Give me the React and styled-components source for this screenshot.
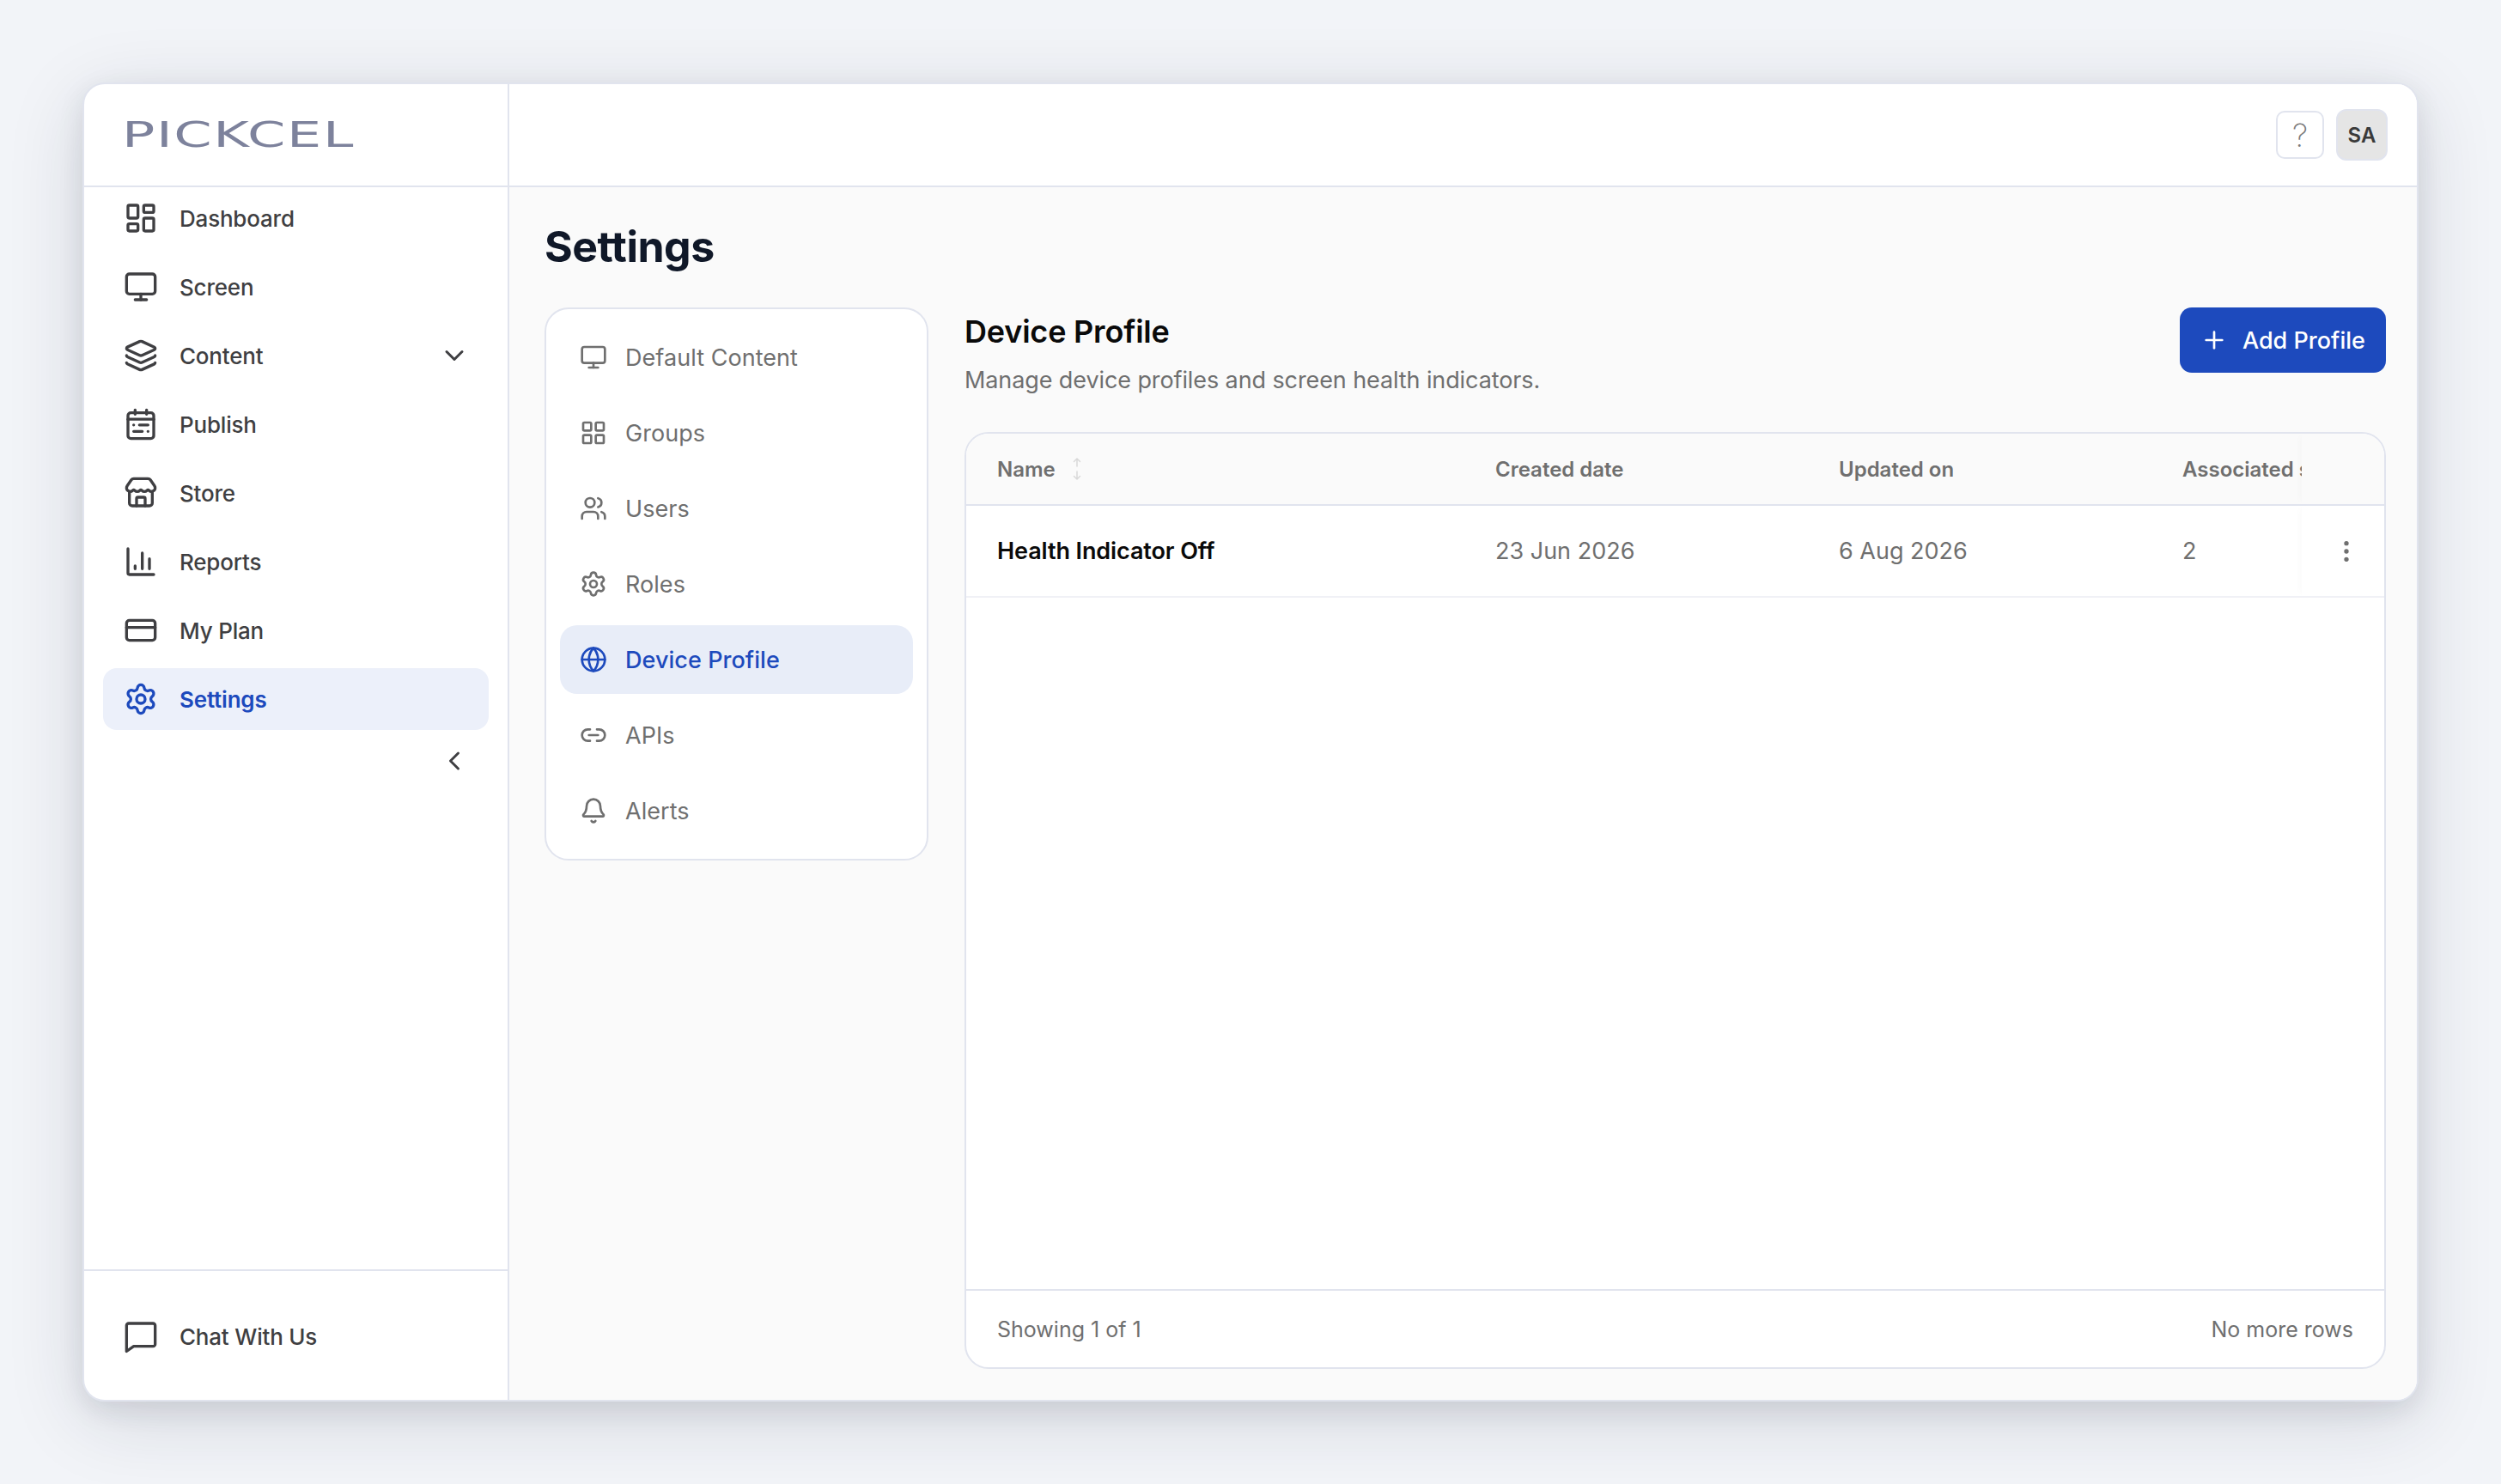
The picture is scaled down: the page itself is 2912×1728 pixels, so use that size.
import styled, { createGlobalStyle } from "styled-components";
import {
  Bell,
  ChevronDown,
  ChevronLeft,
  CreditCard,
  EllipsisVertical,
  Globe,
  LayoutDashboard,
  LayoutGrid,
  Layers,
  Link2,
  Monitor,
  Plus,
  Settings,
  Store,
  Users,
} from "lucide-react";

const GlobalStyle = createGlobalStyle`
  html, body {
    margin: 0;
    background: #f2f4f8;
  }
  * {
    box-sizing: border-box;
  }
`;

const Page = styled.div`
  width: 2912px;
  height: 1728px;
  padding: 96px;
  font-family: Inter, "Noto Sans", sans-serif;
`;

const Card = styled.div`
  display: flex;
  height: 100%;
  background: #fff;
  border: 2px solid #e1e4ee;
  border-radius: 26px;
  overflow: hidden;
  box-shadow: 0 10px 30px rgba(30, 35, 60, 0.1), 0 20px 90px rgba(30, 35, 60, 0.14);
`;

const Sidebar = styled.aside`
  display: flex;
  flex-direction: column;
  width: 495px;
  flex-shrink: 0;
  border-right: 2px solid #e1e4ee;
`;

const LogoBar = styled.div`
  display: flex;
  align-items: center;
  height: 120px;
  padding-left: 44px;
  border-bottom: 2px solid #e1e4ee;
  flex-shrink: 0;
  overflow: hidden;
`;

const LogoText = styled.span`
  display: inline-block;
  font-family: "DejaVu Sans", sans-serif;
  font-size: 40px;
  font-weight: 400;
  line-height: 1;
  color: #7d829c;
  letter-spacing: 1px;
  transform: scaleX(1.59);
  transform-origin: left center;
`;

const SideNav = styled.nav`
  display: flex;
  flex-direction: column;
  gap: 8px;
  padding: 0 22px;
  flex: 1;
`;

const SideItem = styled.div`
  display: flex;
  align-items: center;
  height: 72px;
  padding: 0 22px 0 24px;
  gap: 25px;
  border-radius: 16px;
  font-size: 26px;
  font-weight: ${(props) => (props.$active ? 600 : 500)};
  letter-spacing: -0.2px;
  color: ${(props) => (props.$active ? "#1d4abd" : "#3f3f42")};
  background: ${(props) => (props.$active ? "#ecf0fa" : "transparent")};

  svg {
    flex-shrink: 0;
  }
`;

const SideLabel = styled.span`
  flex: 1;
`;

const CollapseRow = styled.div`
  display: flex;
  justify-content: flex-end;
  padding: 10px 22px 0 0;
  color: #3f3f42;
`;

const SideFooter = styled.div`
  display: flex;
  align-items: center;
  height: 152px;
  padding: 2px 22px 0;
  border-top: 2px solid #e1e4ee;
  flex-shrink: 0;
`;

const Main = styled.div`
  display: flex;
  flex-direction: column;
  flex: 1;
  min-width: 0;
  background: #fafafa;
`;

const TopBar = styled.header`
  display: flex;
  align-items: center;
  justify-content: flex-end;
  gap: 14px;
  height: 120px;
  padding-right: 34px;
  background: #fff;
  border-bottom: 2px solid #e1e4ee;
  flex-shrink: 0;
`;

const HelpButton = styled.button`
  width: 56px;
  height: 56px;
  padding: 0;
  background: #fff;
  border: 2px solid #e1e4ee;
  border-radius: 10px;
  color: #7b7b7b;
  font-family: Inter, sans-serif;
  font-size: 37px;
  font-weight: 200;
  line-height: 1;
`;

const Avatar = styled.div`
  display: flex;
  align-items: center;
  justify-content: center;
  width: 60px;
  height: 60px;
  background: #e5e5e5;
  border: 2px solid #e1e4ee;
  border-radius: 12px;
  font-size: 24px;
  font-weight: 600;
  color: #3a3a3a;
`;

const Content = styled.main`
  display: flex;
  flex-direction: column;
  flex: 1;
  min-height: 0;
  padding: 0 36px 36px 41px;
`;

const PageTitle = styled.h1`
  margin: 0;
  height: 140px;
  padding-top: 39px;
  font-size: 50px;
  font-weight: 700;
  line-height: 1.2;
  letter-spacing: -0.5px;
  color: #101828;
`;

const Columns = styled.div`
  display: flex;
  flex: 1;
  gap: 42px;
  min-height: 0;
`;

const SubNav = styled.nav`
  display: flex;
  flex-direction: column;
  gap: 8px;
  width: 447px;
  height: 644px;
  padding: 16px;
  background: #fff;
  border: 2px solid #e1e4ee;
  border-radius: 28px;
  flex-shrink: 0;
`;

const SubItem = styled.div`
  display: flex;
  align-items: center;
  gap: 21px;
  height: 80px;
  padding-left: 23px;
  border-radius: 20px;
  font-size: 27px;
  letter-spacing: 0.05px;
  font-weight: ${(props) => (props.$active ? 500 : 400)};
  color: ${(props) => (props.$active ? "#1d4abd" : "#6f6f6f")};
  background: ${(props) => (props.$active ? "#e8edf8" : "transparent")};

  svg {
    flex-shrink: 0;
  }
`;

const Panel = styled.section`
  display: flex;
  flex-direction: column;
  flex: 1;
  min-width: 0;
`;

const PanelHead = styled.div`
  display: flex;
  align-items: flex-start;
  justify-content: space-between;
  height: 145px;
  flex-shrink: 0;
`;

const PanelTitle = styled.h2`
  margin: 7px 0 0;
  font-size: 36px;
  font-weight: 600;
  line-height: 42px;
  letter-spacing: -0.2px;
  color: #0a0a0a;
`;

const PanelSub = styled.p`
  margin: 19px 0 0;
  font-size: 27px;
  line-height: 34px;
  letter-spacing: -0.1px;
  color: #6f6f6f;
`;

const AddButton = styled.button`
  display: flex;
  align-items: center;
  gap: 17px;
  width: 240px;
  height: 76px;
  padding: 0 0 0 24px;
  background: #1d4abd;
  border: none;
  border-radius: 14px;
  color: #fff;
  font-family: Inter, sans-serif;
  font-size: 27px;
  font-weight: 500;
  white-space: nowrap;
`;

const Table = styled.div`
  display: flex;
  flex-direction: column;
  flex: 1;
  background: #fff;
  border: 2px solid #e1e4ee;
  border-radius: 28px;
  overflow: hidden;
`;

const HeadRow = styled.div`
  display: flex;
  height: 84px;
  background: #fafafa;
  border-bottom: 2px solid #e1e4ee;
  font-size: 24px;
  font-weight: 600;
  color: #6f6f6f;
  flex-shrink: 0;
`;

const BodyRow = styled.div`
  display: flex;
  height: 107px;
  border-bottom: 2px solid #f0f1f6;
  font-size: 27px;
  color: #6f6f6f;
  flex-shrink: 0;
`;

const Cell = styled.div`
  display: flex;
  align-items: center;
  gap: 18px;
  width: ${(props) => props.$width}px;
  padding-left: ${(props) => props.$pad || 0}px;
  white-space: nowrap;
  overflow: hidden;
  flex-shrink: 0;
`;

const NameText = styled.span`
  font-weight: 600;
  letter-spacing: -0.1px;
  color: #0a0a0a;
`;

const ActionCell = styled.div`
  display: flex;
  align-items: center;
  justify-content: center;
  flex: 1;
  color: #6f6f6f;
  padding-left: 8px;
  box-shadow: -6px 0 8px -4px rgba(0, 0, 0, 0.025);
`;

const TableBody = styled.div`
  flex: 1;
`;

const TableFooter = styled.div`
  display: flex;
  align-items: center;
  justify-content: space-between;
  height: 91px;
  padding: 0 36px;
  border-top: 2px solid #e1e4ee;
  font-size: 25px;
  color: #6f6f6f;
  flex-shrink: 0;
`;

const PublishIcon = () => (
  <svg width="40" height="40" viewBox="0 0 24 24" fill="none" stroke="currentColor" strokeWidth="2" strokeLinecap="round" strokeLinejoin="round">
    <path d="M8 2v3M16 2v3" />
    <rect x="3" y="4" width="18" height="18" rx="2" />
    <path d="M3 8.500h18" />
    <path d="M7 12.500h.01M11 12.500h6M7 17h6M17 17h.01" />
  </svg>
);

const ReportsIcon = () => (
  <svg width="40" height="40" viewBox="0 0 24 24" fill="none" stroke="currentColor" strokeWidth="2" strokeLinecap="round" strokeLinejoin="round">
    <path d="M3 3v17a1 1 0 0 0 1 1h17" />
    <path d="M8 17v-2M13 17V6M18 17v-7" />
  </svg>
);

const ChatIcon = () => (
  <svg width="40" height="40" viewBox="0 0 24 24" fill="none" stroke="currentColor" strokeWidth="2" strokeLinejoin="round">
    <path d="M2 4.500A1.500 1.500 0 0 1 3.500 3h17A1.500 1.500 0 0 1 22 4.500v13a1.500 1.500 0 0 1-1.500 1.500H7l-5 3.500z" />
  </svg>
);

const SortIcon = () => (
  <svg width="14" height="26" viewBox="0 0 14 26" fill="none" stroke="#d9d9d9" strokeWidth="1.500" strokeLinecap="round" strokeLinejoin="round">
    <path d="M7 10V1M3.500 4.500 7 1l3.500 3.500M7 16v9M3.500 21.500 7 25l3.500-3.500" />
  </svg>
);

const sideItems = [
  { label: "Dashboard", icon: <LayoutDashboard size={40} /> },
  { label: "Screen", icon: <Monitor size={40} /> },
  { label: "Content", icon: <Layers size={40} />, chevron: true },
  { label: "Publish", icon: <PublishIcon /> },
  { label: "Store", icon: <Store size={40} /> },
  { label: "Reports", icon: <ReportsIcon /> },
  { label: "My Plan", icon: <CreditCard size={40} /> },
  { label: "Settings", icon: <Settings size={40} />, active: true },
];

const subItems = [
  { label: "Default Content", icon: Monitor },
  { label: "Groups", icon: LayoutGrid },
  { label: "Users", icon: Users },
  { label: "Roles", icon: Settings },
  { label: "Device Profile", icon: Globe, active: true },
  { label: "APIs", icon: Link2 },
  { label: "Alerts", icon: Bell },
];

export default function App() {
  return (
    <Page>
      <GlobalStyle />
      <Card>
        <Sidebar>
          <LogoBar>
            <LogoText>PICKCEL</LogoText>
          </LogoBar>
          <SideNav>
            {sideItems.map((item) => (
              <SideItem key={item.label} $active={item.active}>
                {item.icon}
                <SideLabel>{item.label}</SideLabel>
                {item.chevron && <ChevronDown size={36} />}
              </SideItem>
            ))}
            <CollapseRow>
              <ChevronLeft size={36} />
            </CollapseRow>
          </SideNav>
          <SideFooter>
            <SideItem>
              <ChatIcon />
              <SideLabel>Chat With Us</SideLabel>
            </SideItem>
          </SideFooter>
        </Sidebar>
        <Main>
          <TopBar>
            <HelpButton>?</HelpButton>
            <Avatar>SA</Avatar>
          </TopBar>
          <Content>
            <PageTitle>Settings</PageTitle>
            <Columns>
              <SubNav>
                {subItems.map(({ label, icon: Icon, active }) => (
                  <SubItem key={label} $active={active}>
                    <Icon size={32} />
                    {label}
                  </SubItem>
                ))}
              </SubNav>
              <Panel>
                <PanelHead>
                  <div>
                    <PanelTitle>Device Profile</PanelTitle>
                    <PanelSub>Manage device profiles and screen health indicators.</PanelSub>
                  </div>
                  <AddButton>
                    <Plus size={32} />
                    Add Profile
                  </AddButton>
                </PanelHead>
                <Table>
                  <HeadRow>
                    <Cell $width={616} $pad={36}>
                      Name
                      <SortIcon />
                    </Cell>
                    <Cell $width={400}>Created date</Cell>
                    <Cell $width={400}>Updated on</Cell>
                    <Cell $width={139}>Associated screens</Cell>
                    <ActionCell />
                  </HeadRow>
                  <BodyRow>
                    <Cell $width={616} $pad={36}>
                      <NameText>Health Indicator Off</NameText>
                    </Cell>
                    <Cell $width={400}>23 Jun 2026</Cell>
                    <Cell $width={400}>6 Aug 2026</Cell>
                    <Cell $width={139}>2</Cell>
                    <ActionCell>
                      <EllipsisVertical size={32} />
                    </ActionCell>
                  </BodyRow>
                  <TableBody />
                  <TableFooter>
                    <span>Showing 1 of 1</span>
                    <span>No more rows</span>
                  </TableFooter>
                </Table>
              </Panel>
            </Columns>
          </Content>
        </Main>
      </Card>
    </Page>
  );
}
